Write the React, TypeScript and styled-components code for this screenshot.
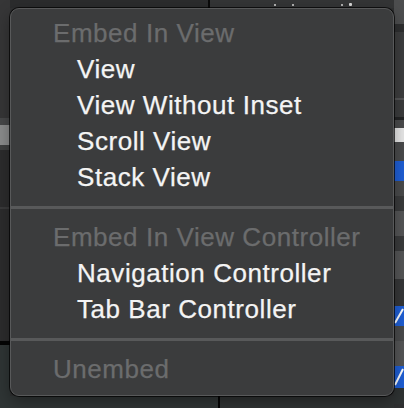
import React from 'react';
import styled, { createGlobalStyle } from 'styled-components';

const GlobalStyle = createGlobalStyle`
  html, body {
    margin: 0;
    padding: 0;
    background: #2f3031;
  }
  body {
    font-family: 'Liberation Sans', Arial, sans-serif;
  }
`;

type MenuEntry =
  | { kind: 'header'; label: string }
  | { kind: 'item'; label: string }
  | { kind: 'separator' };

const entries: MenuEntry[] = [
  { kind: 'header', label: 'Embed In View' },
  { kind: 'item', label: 'View' },
  { kind: 'item', label: 'View Without Inset' },
  { kind: 'item', label: 'Scroll View' },
  { kind: 'item', label: 'Stack View' },
  { kind: 'separator' },
  { kind: 'header', label: 'Embed In View Controller' },
  { kind: 'item', label: 'Navigation Controller' },
  { kind: 'item', label: 'Tab Bar Controller' },
  { kind: 'separator' },
  { kind: 'header', label: 'Unembed' },
];

// strips of the panels peeking out behind the menu
const leftStrips = [
  { h: 118, c: '#363637' },
  { h: 7, c: '#474849' },
  { h: 20, c: '#8b8c8c' },
  { h: 5, c: '#3f4040' },
  { h: 57, c: '#2c2c2d' },
  { h: 2, c: '#3a3a3b' },
  { h: 132, c: '#2c2c2d' },
  { h: 4, c: '#050505' },
  { h: 63, c: '#2f3535' },
];

const rightStrips: { h: number; c: string; check?: boolean }[] = [
  { h: 24, c: '#4d4e4f' },
  { h: 8, c: '#2e2f30' },
  { h: 66, c: '#3d3e3f' },
  { h: 2, c: '#555657' },
  { h: 17, c: '#3b3c3d' },
  { h: 3, c: '#232425' },
  { h: 8, c: '#4a4b4c' },
  { h: 14, c: '#e8e8e8' },
  { h: 19, c: '#4a4b4c' },
  { h: 20, c: '#1f5fd6' },
  { h: 15, c: '#4a4b4c' },
  { h: 15, c: '#3a3b3c' },
  { h: 25, c: '#555657' },
  { h: 15, c: '#3a3b3c' },
  { h: 28, c: '#555657' },
  { h: 27, c: '#363738' },
  { h: 20, c: '#1f5fd6', check: true },
  { h: 15, c: '#4a4b4c' },
  { h: 25, c: '#555657' },
  { h: 22, c: '#1f5fd6', check: true },
  { h: 16, c: '#2f3333' },
];

const App: React.FC = () => {
  return (
    <>
      <GlobalStyle />
      <StyledDesktop>
        <StyledSideRail>
          {leftStrips.map((s, i) => (
            <StyledStrip key={i} $height={s.h} $color={s.c} />
          ))}
        </StyledSideRail>

        <StyledTopBar>
          <StyledTopDark />
          <StyledTopDivider />
          <StyledTopText>
            <StyledDot />
            <StyledDot $gap={16} />
            <StyledDot $gap={47} />
            <StyledDot $gap={6} $big />
          </StyledTopText>
        </StyledTopBar>

        <StyledSideRail $right>
          {rightStrips.map((s, i) => (
            <StyledStrip key={i} $height={s.h} $color={s.c}>
              {s.check && (
                <svg width="10" height={s.h} viewBox={`0 0 10 ${s.h}`}>
                  <path
                    d={`M1 ${s.h - 3} L9 3`}
                    stroke="#ffffff"
                    strokeWidth="2"
                    fill="none"
                  />
                </svg>
              )}
            </StyledStrip>
          ))}
        </StyledSideRail>

        <StyledMenu>
          {entries.map((entry, i) => {
            if (entry.kind === 'separator') return <StyledSeparator key={i} />;
            if (entry.kind === 'header')
              return <StyledHeader key={i}>{entry.label}</StyledHeader>;
            return <StyledItem key={i}>{entry.label}</StyledItem>;
          })}
        </StyledMenu>

        <StyledBottomBar>
          <StyledBottomPart />
          <StyledBottomDivider />
          <StyledBottomPart $right />
        </StyledBottomBar>
      </StyledDesktop>
    </>
  );
};

const StyledDesktop = styled.div`
  width: 404px;
  height: 408px;
  overflow: hidden;
  display: grid;
  grid-template-columns: 10px 384px 10px;
  grid-template-rows: 8px 388px 12px;
  background: #2f3031;
`;

const StyledSideRail = styled.div<{ $right?: boolean }>`
  grid-row: 1 / 4;
  grid-column: ${p => (p.$right ? 3 : 1)};
  display: flex;
  flex-direction: column;
  overflow: hidden;
`;

const StyledStrip = styled.div<{ $height: number; $color: string }>`
  flex: 0 0 ${p => p.$height}px;
  background: ${p => p.$color};
  display: flex;
  align-items: center;
  justify-content: flex-start;

  svg {
    display: block;
  }
`;

const StyledTopBar = styled.div`
  grid-row: 1;
  grid-column: 2;
  display: flex;
  background: #343536;
`;

const StyledTopDark = styled.div`
  width: 198px;
  background: #2b2c2d;
`;

const StyledTopDivider = styled.div`
  width: 2px;
  background: #0a0a0a;
`;

const StyledTopText = styled.div`
  flex: 1;
  display: flex;
  align-items: flex-end;
  padding: 0 0 2px 64px;
`;

const StyledDot = styled.span<{ $gap?: number; $big?: boolean }>`
  width: ${p => (p.$big ? 3 : 2)}px;
  height: ${p => (p.$big ? 3 : 2)}px;
  margin-left: ${p => p.$gap ?? 0}px;
  background: #d8d8d8;
  border-radius: 1px;
`;

const StyledMenu = styled.div`
  grid-row: 2;
  grid-column: 2;
  box-sizing: border-box;
  display: flex;
  flex-direction: column;
  padding: 6px 0 0;
  background: #3b3c3d;
  border: 1px solid #58595a;
  border-radius: 9px;
  box-shadow: 0 0 0 1px rgba(0, 0, 0, 0.7), 0 6px 16px rgba(0, 0, 0, 0.35);
  position: relative;
  z-index: 1;
`;

const StyledRow = styled.div`
  height: 36px;
  line-height: 36px;
  font-size: 26px;
  letter-spacing: 0.55px;
  white-space: nowrap;
  -webkit-text-stroke: 0.25px currentColor;
`;

const StyledHeader = styled(StyledRow)`
  padding-left: 42px;
  color: #6b6c6d;
`;

const StyledItem = styled(StyledRow)`
  padding-left: 66px;
  color: #f4f4f4;
`;

const StyledSeparator = styled.div`
  height: 3px;
  margin: 11px 0 10px;
  background: #58595a;
`;

const StyledBottomBar = styled.div`
  grid-row: 3;
  grid-column: 2;
  display: flex;
`;

const StyledBottomPart = styled.div<{ $right?: boolean }>`
  flex: ${p => (p.$right ? 1 : '0 0 208px')};
  background: ${p => (p.$right ? '#303333' : '#313636')};
`;

const StyledBottomDivider = styled.div`
  width: 2px;
  background: #050505;
`;

export default App;
